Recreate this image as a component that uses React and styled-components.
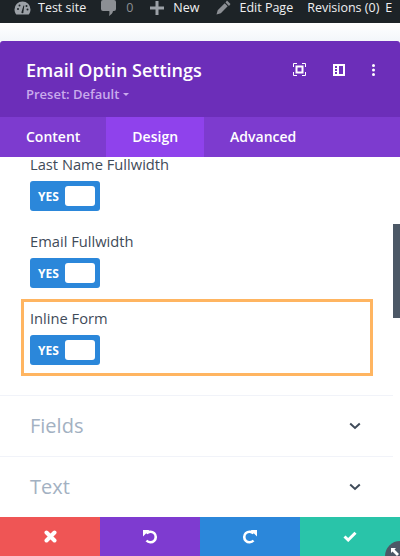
import React from "react";
import styled, { createGlobalStyle } from "styled-components";

const Global = createGlobalStyle`
  html, body { margin: 0; padding: 0; background: #fff; }
  body { font-family: "Open Sans", "Liberation Sans", sans-serif; }
  * { box-sizing: border-box; }
`;

const Page = styled.div`
  width: 400px;
  height: 556px;
  position: relative;
  overflow: hidden;
  display: flex;
  flex-direction: column;
  background: #fff;
`;

const AdminBar = styled.div`
  height: 23px;
  flex: none;
  background: #1d2327;
  color: #f0f0f1;
  display: flex;
  align-items: center;
  font-size: 12.5px;
  white-space: nowrap;
  padding: 0 0 8px 14px;
  overflow: hidden;
`;

const AdminItem = styled.span`
  display: flex;
  align-items: center;
  flex: none;
  margin-left: ${(p) => p.$gap || 0}px;
  gap: ${(p) => p.$inner || 0}px;
`;

const Muted = styled.span`
  color: #8c8f94;
`;

const Gap = styled.div`
  height: 18px;
  flex: none;
  background: linear-gradient(#fff, #f3f6fa);
`;

const Panel = styled.div`
  flex: 1;
  min-height: 0;
  display: flex;
  flex-direction: column;
  border-radius: 3px 3px 0 0;
  overflow: hidden;
`;

const Header = styled.div`
  height: 76px;
  flex: none;
  background: #6c2eb9;
  padding: 16px 25px 0 26px;
  display: flex;
  justify-content: space-between;
  align-items: flex-start;
`;

const Title = styled.div`
  color: #fff;
  font-size: 18px;
  font-weight: 600;
  line-height: 26px;
`;

const Preset = styled.div`
  color: #c9abec;
  font-size: 13px;
  font-weight: 600;
  line-height: 16px;
  margin-top: 3px;
  display: flex;
  align-items: center;
  gap: 4px;
`;

const Caret = styled.span`
  width: 0;
  height: 0;
  border-left: 3px solid transparent;
  border-right: 3px solid transparent;
  border-top: 3px solid #c9abec;
  margin-top: 1px;
`;

const HeaderIcons = styled.div`
  display: flex;
  align-items: center;
  gap: 27px;
  margin-top: 6px;
`;

const Tabs = styled.div`
  height: 40px;
  flex: none;
  background: #7d3bcf;
  display: flex;
`;

const Tab = styled.div`
  padding: 0 26px 2px;
  display: flex;
  align-items: center;
  color: #fff;
  font-size: 14px;
  font-weight: 600;
  background: ${(p) => (p.$active ? "#8f42ec" : "transparent")};
`;

const Body = styled.div`
  flex: 1;
  min-height: 0;
  position: relative;
  overflow: hidden;
  padding-right: 7px;
`;

const Scrollbar = styled.div`
  position: absolute;
  right: 0;
  top: 67px;
  width: 7px;
  height: 94px;
  background: #4c5866;
`;

const Fields = styled.div`
  padding: 0 0 19px 21px;
`;

const Field = styled.div`
  width: 352px;
  height: ${(p) => p.$h}px;
  padding: ${(p) => p.$top}px 0 0 ${(p) => (p.$highlight ? 6 : 9)}px;
  border: ${(p) => (p.$highlight ? "3px solid #ffb561" : "none")};
  margin-bottom: ${(p) => p.$mb || 0}px;
`;

const Label = styled.div`
  color: #3f4b59;
  font-size: 14.7px;
  line-height: 14px;
  margin-bottom: 10px;
`;

const Toggle = styled.div`
  width: 70px;
  height: 30px;
  border-radius: 3px;
  background: #2b87da;
  display: flex;
  align-items: center;
  justify-content: space-between;
  padding: 0 5px 0 8px;
`;

const YesText = styled.span`
  color: #fff;
  font-size: 12px;
  font-weight: 700;
`;

const Knob = styled.span`
  width: 30px;
  height: 20px;
  background: #fff;
  border-radius: 3px;
`;

const Section = styled.div`
  height: 61px;
  border-top: 1px solid #f1f3f9;
  padding: 0 32px 0 30px;
  display: flex;
  align-items: center;
  justify-content: space-between;
`;

const SectionTitle = styled.span`
  color: #a3b1c2;
  font-size: 20px;
  line-height: 24px;
`;

const Footer = styled.div`
  height: 39px;
  flex: none;
  display: flex;
`;

const FootButton = styled.div`
  flex: 1;
  background: ${(p) => p.$bg};
  display: flex;
  align-items: center;
  justify-content: center;
`;

const Corner = styled.div`
  position: absolute;
  left: 385px;
  top: 541px;
  width: 30px;
  height: 30px;
  border-radius: 50%;
  background: #4c5866;
  padding: 7px 0 0 6px;
  display: flex;
  align-items: flex-start;
`;

const Gauge = () => (
  <svg width="17" height="14" viewBox="0 0 17 14">
    <path d="M8.500 0.500a8 8 0 0 1 8 8c0 2-.7 3.700-1.800 5H2.300C1.200 12.200.5 10.500.5 8.500a8 8 0 0 1 8-8z" fill="#9ca1a7" />
    <path d="M7.500 11l2-6.500 0.800 0.200-.9 6.300a1 1 0 1 1-1.900 0z" fill="#1d2327" />
    <circle cx="4" cy="8" r="1" fill="#1d2327" />
    <circle cx="5.500" cy="4.500" r="1" fill="#1d2327" />
    <circle cx="12.500" cy="5" r="1" fill="#1d2327" />
    <circle cx="13.500" cy="8.500" r="1" fill="#1d2327" />
  </svg>
);

const Bubble = () => (
  <svg width="16" height="16" viewBox="0 0 16 16">
    <path d="M2 0h11a2 2 0 0 1 2 2v7a2 2 0 0 1-2 2h-1c-.3 2-1.500 3.500-4 5 .5-2 .5-3.500.3-5H2a2 2 0 0 1-2-2V2a2 2 0 0 1 2-2z" fill="#8c8f94" />
  </svg>
);

const Plus = () => (
  <svg width="14" height="14" viewBox="0 0 14 14">
    <path d="M5.500 0h3v5.500H14v3H8.500V14h-3V8.500H0v-3h5.500z" fill="#9ca1a7" />
  </svg>
);

const Pencil = () => (
  <svg width="15" height="15" viewBox="0 0 15 15">
    <path d="M11 0.500l3.500 3.500-1.500 2-3.500-3.500zM8.700 3.300l3 3-6.900 7-4.300 1.200 1.200-4.300z" fill="#8c8f94" />
  </svg>
);

const Focus = () => (
  <svg width="13" height="13" viewBox="0 0 13 13" fill="none" stroke="#fff">
    <path d="M0.500 4V0.500H4M9 0.500h3.500V4M12.500 9v3.500H9M4 12.500H0.500V9" />
    <rect x="3.500" y="3.500" width="6" height="6" strokeWidth="2" />
  </svg>
);

const Columns = () => (
  <svg width="12" height="12" viewBox="0 0 12 12">
    <path fillRule="evenodd" d="M0 0h12v12H0zM6 2v8h4V2zM2 2v2h2V2zM2 5v2h2V5zM2 8v2h2V8z" fill="#fff" />
  </svg>
);

const Dots = () => (
  <svg width="3" height="12" viewBox="0 0 3 12">
    <circle cx="1.500" cy="1.500" r="1.500" fill="#fff" />
    <circle cx="1.500" cy="6" r="1.500" fill="#fff" />
    <circle cx="1.500" cy="10.500" r="1.500" fill="#fff" />
  </svg>
);

const Chevron = () => (
  <svg width="12" height="8" viewBox="0 0 12 8" fill="none">
    <path d="M1.200 1.500L6 6l4.800-4.500" stroke="#3f4b59" strokeWidth="2" />
  </svg>
);

const Cross = () => (
  <svg width="13" height="13" viewBox="0 0 13 13" fill="none">
    <path d="M2.500 2.500l8 8M10.500 2.500l-8 8" stroke="#fff" strokeWidth="4" strokeLinecap="round" />
  </svg>
);

const Undo = () => (
  <svg width="16" height="16" viewBox="0 0 16 16" fill="none">
    <path d="M4.500 4.500A5.300 5.300 0 1 1 4.500 11.500" stroke="#fff" strokeWidth="2.600" />
    <path d="M1 1h6.500L1 7.500z" fill="#fff" />
  </svg>
);

const Redo = () => (
  <svg width="16" height="16" viewBox="0 0 16 16" fill="none">
    <path d="M11.500 4.500A5.300 5.300 0 1 0 11.500 11.500" stroke="#fff" strokeWidth="2.600" />
    <path d="M15 1H8.500L15 7.500z" fill="#fff" />
  </svg>
);

const Check = () => (
  <svg width="14" height="11" viewBox="0 0 14 11" fill="none">
    <path d="M1.500 5.500l3.700 3.500L12.500 1.800" stroke="#fff" strokeWidth="3" />
  </svg>
);

const ResizeArrow = () => (
  <svg width="9" height="9" viewBox="0 0 9 9">
    <path d="M0 0h5L3.500 1.500 8 6 6 8 1.500 3.500 0 5z" fill="#fff" />
  </svg>
);

const ToggleYes = () => (
  <Toggle>
    <YesText>YES</YesText>
    <Knob />
  </Toggle>
);

export default function App() {
  return (
    <Page>
      <Global />
      <AdminBar>
        <AdminItem $inner={7}><Gauge />Test site</AdminItem>
        <AdminItem $gap={15} $inner={9}><Bubble /><Muted>0</Muted></AdminItem>
        <AdminItem $gap={17} $inner={9}><Plus />New</AdminItem>
        <AdminItem $gap={17} $inner={8}><Pencil />Edit Page</AdminItem>
        <AdminItem $gap={14}>Revisions (0)</AdminItem>
        <AdminItem $gap={6}>E</AdminItem>
      </AdminBar>
      <Gap />
      <Panel>
        <Header>
          <div>
            <Title>Email Optin Settings</Title>
            <Preset>Preset: Default <Caret /></Preset>
          </div>
          <HeaderIcons>
            <Focus />
            <Columns />
            <Dots />
          </HeaderIcons>
        </Header>
        <Tabs>
          <Tab>Content</Tab>
          <Tab $active>Design</Tab>
          <Tab>Advanced</Tab>
        </Tabs>
        <Body>
          <Fields>
            <Field $h={65} $top={0} $mb={12}>
              <Label>Last Name Fullwidth</Label>
              <ToggleYes />
            </Field>
            <Field $h={65} $top={0} $mb={0}>
              <Label>Email Fullwidth</Label>
              <ToggleYes />
            </Field>
            <Field $h={77} $top={9} $highlight>
              <Label>Inline Form</Label>
              <ToggleYes />
            </Field>
          </Fields>
          <Section>
            <SectionTitle>Fields</SectionTitle>
            <Chevron />
          </Section>
          <Section>
            <SectionTitle>Text</SectionTitle>
            <Chevron />
          </Section>
          <Scrollbar />
        </Body>
        <Footer>
          <FootButton $bg="#ef5555"><Cross /></FootButton>
          <FootButton $bg="#7e3bd0"><Undo /></FootButton>
          <FootButton $bg="#2b87da"><Redo /></FootButton>
          <FootButton $bg="#29c4a9"><Check /></FootButton>
        </Footer>
      </Panel>
      <Corner><ResizeArrow /></Corner>
    </Page>
  );
}
